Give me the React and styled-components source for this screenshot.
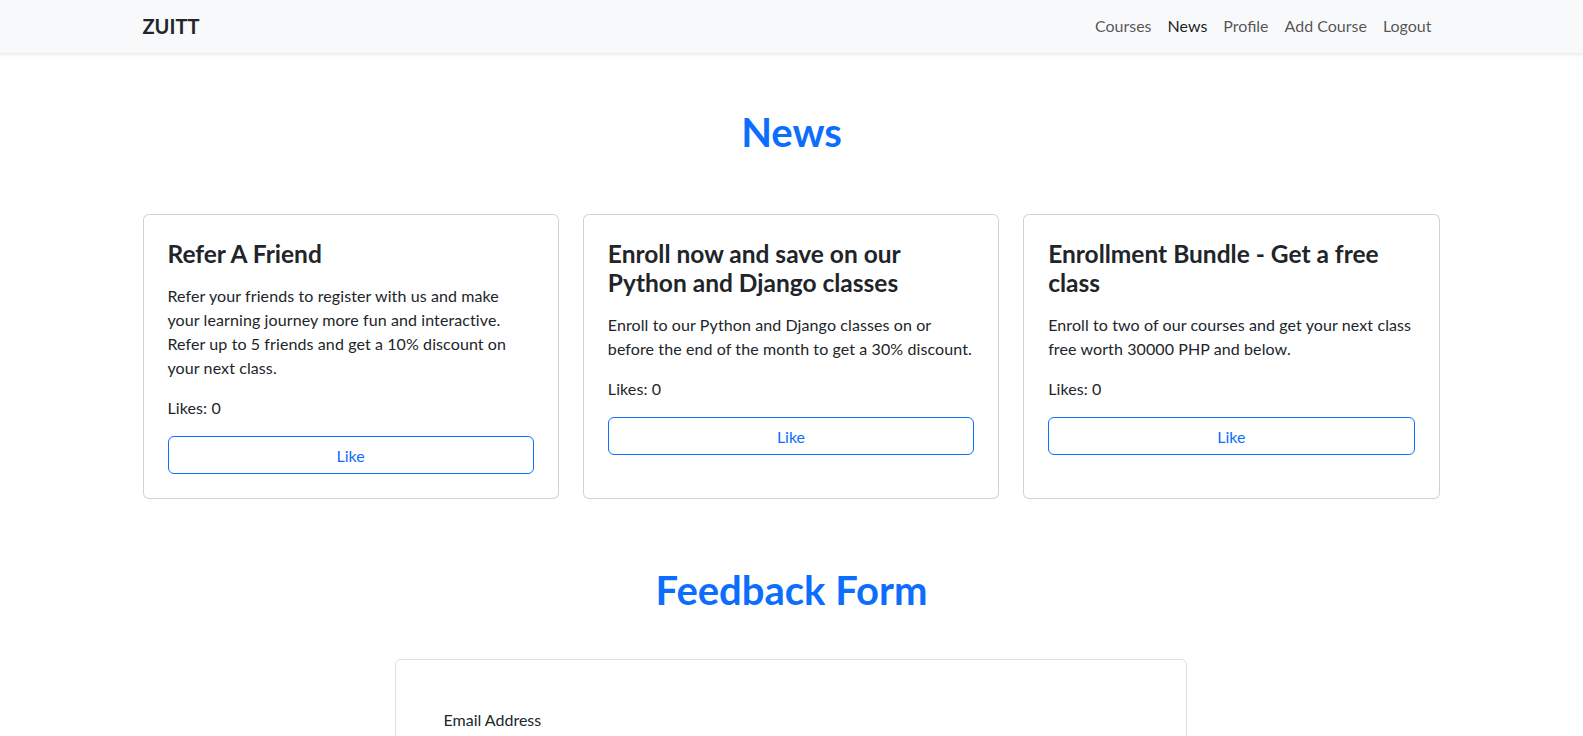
import React from "react";
import styled, { createGlobalStyle } from "styled-components";

const GlobalStyle = createGlobalStyle`
  html { scrollbar-width: none; }
  html::-webkit-scrollbar { display: none; }
  body {
    margin: 0;
    font-family: Lato, "Noto Sans", sans-serif;
    font-size: 16px;
    line-height: 1.5;
    color: #212529;
    background: #fff;
  }
  *, *::before, *::after { box-sizing: border-box; }
`;

const Container = styled.div`
  width: 100%;
  max-width: 1320px;
  margin: 0 auto;
  padding: 0 12px;
`;

const NavBar = styled.nav`
  background: #f8f9fa;
  box-shadow: 0 1px 3px rgba(0, 0, 0, 0.08);
  border-bottom: 1px solid #eceeef;
`;

const NavInner = styled(Container)`
  display: flex;
  align-items: center;
  justify-content: space-between;
  height: 53px;
  padding-bottom: 1px;
`;

const Brand = styled.a`
  font-size: 20px;
  font-weight: 700;
  color: #212529;
  text-decoration: none;
  margin-left: -1px;
`;

const NavLinks = styled.ul`
  display: flex;
  list-style: none;
  margin: 0;
  padding: 0;
`;

const NavLink = styled.a`
  display: block;
  padding: 8px 8px;
  font-size: 16px;
  text-decoration: none;
  color: ${(p) => (p.$active ? "rgba(0,0,0,0.9)" : "rgba(0,0,0,0.68)")};
`;

const PageTitle = styled.h1`
  margin: 0;
  text-align: center;
  font-size: 40px;
  font-weight: 700;
  line-height: 48px;
  color: #0d6efd;
  padding-top: ${(p) => p.$top}px;
  padding-bottom: ${(p) => p.$bottom}px;
`;

const CardGrid = styled.div`
  display: grid;
  grid-template-columns: repeat(3, 1fr);
  gap: 24px;
  margin-left: -1px;
`;

const Card = styled.div`
  display: flex;
  flex-direction: column;
  border: 1px solid rgba(0, 0, 0, 0.175);
  border-radius: 6px;
  padding: 24px;
  background: #fff;
`;

const CardTitle = styled.h4`
  margin: 0 0 16px;
  font-size: 24.5px;
  font-weight: 700;
  line-height: 29px;
  color: #212529;
`;

const CardText = styled.p`
  margin: 0 0 16px;
  letter-spacing: 0.1px;
`;

const LikeButton = styled.button`
  width: 100%;
  height: 38px;
  border: 1px solid #0d6efd;
  border-radius: 6px;
  background: transparent;
  color: #0d6efd;
  font-family: inherit;
  font-size: 16px;
  cursor: pointer;
`;

const FormCard = styled.div`
  width: 792px;
  margin: 0 auto;
  border: 1px solid rgba(0, 0, 0, 0.125);
  border-radius: 6px;
  padding: 48px;
  transform: translateX(-1px);
`;

const Label = styled.label`
  display: block;
  margin-bottom: 8px;
`;

const Input = styled.input`
  display: block;
  width: 100%;
  height: 38px;
  padding: 6px 12px;
  border: 1px solid #dee2e6;
  border-radius: 6px;
  font-family: inherit;
  font-size: 16px;
  margin-bottom: 16px;
`;

const news = [
  {
    title: "Refer A Friend",
    text: "Refer your friends to register with us and make your learning journey more fun and interactive. Refer up to 5 friends and get a 10% discount on your next class.",
  },
  {
    title: "Enroll now and save on our Python and Django classes",
    text: "Enroll to our Python and Django classes on or before the end of the month to get a 30% discount.",
  },
  {
    title: "Enrollment Bundle - Get a free class",
    text: "Enroll to two of our courses and get your next class free worth 30000 PHP and below.",
  },
];

export default function App() {
  return (
    <>
      <GlobalStyle />
      <NavBar>
        <NavInner>
          <Brand href="#">ZUITT</Brand>
          <NavLinks>
            <li><NavLink href="#">Courses</NavLink></li>
            <li><NavLink href="#" $active>News</NavLink></li>
            <li><NavLink href="#">Profile</NavLink></li>
            <li><NavLink href="#">Add Course</NavLink></li>
            <li><NavLink href="#">Logout</NavLink></li>
          </NavLinks>
        </NavInner>
      </NavBar>
      <Container>
        <PageTitle $top={54} $bottom={58}>News</PageTitle>
        <CardGrid>
          {news.map((n) => (
            <Card key={n.title}>
              <CardTitle>{n.title}</CardTitle>
              <CardText>{n.text}</CardText>
              <CardText>Likes: 0</CardText>
              <LikeButton>Like</LikeButton>
            </Card>
          ))}
        </CardGrid>
        <PageTitle $top={67} $bottom={45}>Feedback Form</PageTitle>
        <FormCard>
          <Label htmlFor="email">Email Address</Label>
          <Input id="email" type="email" />
          <Label htmlFor="msg">Message</Label>
          <Input id="msg" type="text" />
        </FormCard>
      </Container>
    </>
  );
}
